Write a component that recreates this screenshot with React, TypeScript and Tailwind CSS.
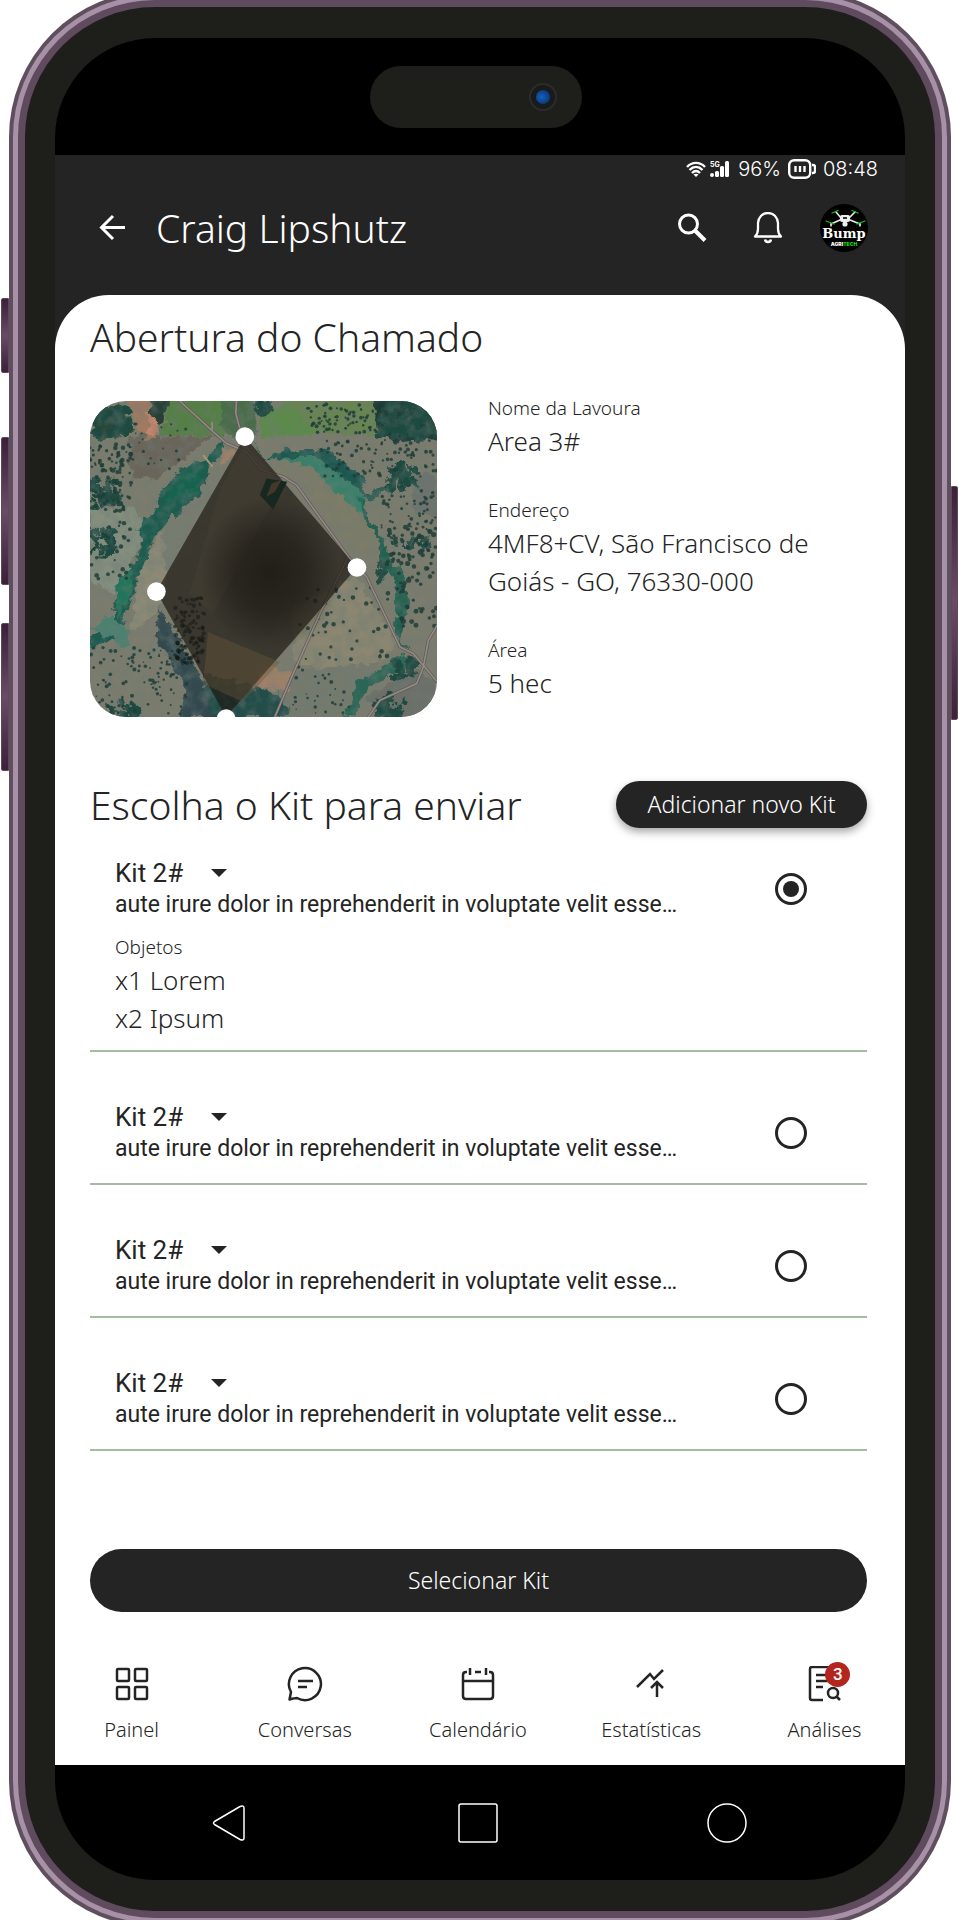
import React, { useState } from "react";

const fields = [
  { label: "Nome da Lavoura", value: "Area 3#" },
  { label: "Endereço", value: "4MF8+CV, São Francisco de Goiás - GO, 76330-000" },
  { label: "Área", value: "5 hec" },
];

const kits = [
  { id: 1, name: "Kit 2#", objects: ["x1 Lorem", "x2 Ipsum"] },
  { id: 2, name: "Kit 2#", objects: [] },
  { id: 3, name: "Kit 2#", objects: [] },
  { id: 4, name: "Kit 2#", objects: [] },
];

const kitDescription =
  "aute irure dolor in reprehenderit in voluptate velit esse…";

// small seeded generator so the vegetation is the same on every render
const scatter = (
  seed: number,
  count: number,
  x: number,
  y: number,
  w: number,
  h: number,
  min: number,
  max: number
) => {
  let s = seed * 7919;
  const next = () => {
    s = (s * 16807) % 2147483647;
    return s / 2147483647;
  };
  return Array.from({ length: count }, () => ({
    x: Math.round(x + next() * w),
    y: Math.round(y + next() * h),
    r: Math.round((min + next() * (max - min)) * 10) / 10,
  }));
};

const bushes = [
  ...scatter(11, 90, 30, 190, 130, 210, 3, 7),
  ...scatter(17, 20, 160, 130, 160, 150, 2, 5),
  ...scatter(23, 30, 30, 420, 130, 180, 3, 7),
  ...scatter(37, 110, 30, 800, 290, 205, 2, 6),
  ...scatter(41, 80, 720, 180, 350, 110, 3, 6),
  ...scatter(43, 50, 900, 320, 170, 130, 3, 6),
  ...scatter(59, 50, 920, 440, 150, 120, 4, 8),
  ...scatter(67, 35, 950, 560, 120, 180, 4, 8),
  ...scatter(71, 45, 660, 620, 270, 220, 3, 7),
  ...scatter(73, 30, 630, 850, 200, 150, 2, 6),
  ...scatter(83, 70, 680, 70, 210, 90, 3, 6),
];

const groves = [
  ...scatter(101, 60, 40, 80, 110, 90, 6, 14),
  ...scatter(103, 60, 895, 60, 165, 110, 8, 16),
  ...scatter(107, 40, 925, 260, 85, 65, 6, 13),
  ...scatter(109, 40, 30, 300, 90, 80, 5, 12),
  ...scatter(113, 40, 30, 450, 80, 80, 5, 12),
  ...scatter(127, 30, 525, 70, 45, 30, 5, 10),
  ...scatter(131, 30, 885, 950, 90, 60, 6, 13),
  ...scatter(137, 25, 90, 970, 80, 50, 6, 12),
  ...scatter(139, 15, 892, 550, 30, 45, 5, 10),
  ...scatter(149, 25, 940, 840, 60, 50, 5, 12),
  ...scatter(151, 25, 925, 470, 130, 30, 4, 9),
];

const FieldMap = () => (
  <svg
    viewBox="30 63 1042 947"
    preserveAspectRatio="xMidYMid slice"
    className="block h-[316px] w-full rounded-[36px]"
    role="img"
    aria-label="Mapa da lavoura"
  >
    <defs>
      <filter id="soft" x="-10%" y="-10%" width="120%" height="120%">
        <feTurbulence type="fractalNoise" baseFrequency="0.035" numOctaves="3" seed="4" />
        <feDisplacementMap
          in="SourceGraphic"
          scale="36"
          xChannelSelector="R"
          yChannelSelector="G"
        />
        <feGaussianBlur stdDeviation="2" />
      </filter>
      <radialGradient id="shade">
        <stop offset="0" stopColor="#17140f" stopOpacity="0.7" />
        <stop offset="0.5" stopColor="#17140f" stopOpacity="0.5" />
        <stop offset="1" stopColor="#17140f" stopOpacity="0" />
      </radialGradient>
      <filter id="grain" x="0" y="0" width="100%" height="100%">
        <feTurbulence type="fractalNoise" baseFrequency="0.03" numOctaves="5" seed="9" />
        <feColorMatrix values="0 0 0 0 0.16  0 0 0 0 0.2  0 0 0 0 0.18  2 0 0 0 -0.75" />
      </filter>
    </defs>
    <rect x="0" y="0" width="1100" height="1100" fill="#7b7c6d" />
    <g filter="url(#soft)">
      <path d="M150 170H400L330 220 240 290 150 300Z" fill="#6b655a" />
      <path d="M30 390 160 380 190 430 160 560 100 640 30 600Z" fill="#848e7e" />
      <path d="M250 455 370 350 440 240 250 600Z" fill="#777b70" />
      <path d="M180 560 250 450 260 600 230 700 150 760Z" fill="#8c8a76" />
      <path d="M560 260 700 250 860 420 900 540 820 520 650 300Z" fill="#7c7b68" />
      <path d="M640 680 830 590 950 790 850 900 640 840Z" fill="#8a8671" />
      <path d="M620 870 900 850 800 1010H600Z" fill="#757a6d" />
      <path d="M990 270 1072 290V420L1000 390Z" fill="#6d736d" />
      <path d="M860 950 1000 870 1072 900V1010H900Z" fill="#6c7069" />
      <path d="M140 60H240V170H180Z" fill="#a37a60" />
      <path d="M205 95H240V165H200Z" fill="#c2856b" />
      <path d="M275 50H480V168H240Z" fill="#557f45" />
      <path d="M420 50H530V170H430Z" fill="#4a6c48" />
      <path d="M540 90 640 70 730 165 540 170Z" fill="#5b8a4b" />
      <path d="M560 50H900V160L720 165 640 80Z" fill="#678551" />
      <path d="M215 55H275L245 130 210 100Z" fill="#263f38" />
      <path d="M880 50H1080V180L940 190 890 150Z" fill="#1f3a34" />
      <path d="M50 80H130L160 150 70 180 40 160Z" fill="#2e4638" />
      {/* river vegetation */}
      <path
        d="M430 180 380 235 300 270 240 340 225 390 180 430V500L170 550 120 600 100 680 100 740 30 770V800L110 780 150 680 175 590 220 480 290 400 360 340 385 260 440 210Z"
        fill="#1d5c50"
      />
      <path d="M300 290 370 260 360 330 250 370Z" fill="#176350" />
      <path d="M110 610 160 570 150 660 110 720Z" fill="#23755a" />
      <path d="M30 740 90 710 150 760 140 810 90 770Z" fill="#4b8170" />
      <path d="M500 180 560 235 620 210 720 205 780 240 850 290 860 350 780 290 690 225 600 245 560 240Z" fill="#1d5850" />
      <path d="M600 240 690 225 790 290 850 340 860 420 760 330 700 260Z" fill="#37806a" />
      <path d="M840 340 865 410 900 450 925 530 965 570 985 640 960 800 990 810 945 760 945 600 905 545 890 470 850 410Z" fill="#22604f" />
      <path d="M960 820 880 880 830 900 820 960 790 1010 830 1000 860 920 940 880 1000 850Z" fill="#2a6654" />
      <path d="M850 350 930 310 940 320 860 370Z" fill="#2f5f52" />
      <path d="M240 680 310 800 350 870 430 1010H300L320 930 280 860 230 780Z" fill="#31494f" />
      <path d="M370 880 540 920 610 950 630 1010H400Z" fill="#224d49" />
      <path d="M550 860 640 870 620 930 520 920Z" fill="#a08168" />
      <path d="M430 200 470 205 450 240 420 260Z" fill="#9a8168" />
    </g>
    <g fill="#1c4a40" filter="url(#soft)">
      {groves.map((b, i) => (
        <circle key={i} cx={b.x} cy={b.y} r={b.r} />
      ))}
    </g>
    <rect x="30" y="63" width="1042" height="947" filter="url(#grain)" opacity="0.5" />
    <g fill="#1f3d38" fillOpacity="0.85">
      {bushes.map((b, i) => (
        <circle key={i} cx={b.x} cy={b.y} r={b.r} />
      ))}
    </g>
    <g fill="none" strokeLinejoin="round">
      <g stroke="#5e5650" strokeWidth="9">
        <path d="M300 63 400 155 440 190 500 215 545 270 610 290 650 315 805 530 860 590 960 800 1000 820 1072 905" />
        <path d="M470 63 468 100 480 145" />
        <path d="M805 530 720 700 640 880 585 1010" />
        <path d="M1072 735 1045 780 1030 860 1010 910 900 960 865 1010" />
      </g>
      <g stroke="#938a88" strokeWidth="5">
        <path d="M300 63 400 155 440 190 500 215 545 270 610 290 650 315 805 530 860 590 960 800 1000 820 1072 905" />
        <path d="M470 63 468 100 480 145M397 125V150" />
        <path d="M805 530 720 700 640 880 585 1010" />
        <path d="M1072 735 1045 780 1030 860 1010 910 900 960 865 1010" />
      </g>
      <path d="M370 225 398 260" stroke="#a69477" strokeWidth="6" />
    </g>
    {/* selected area */}
    <path d="M495 170 831 562 439 1010 230 634Z" fill="#1d1811" fillOpacity="0.68" />
    <path d="M495 190 420 330 330 640 400 700 560 400 620 330Z" fill="#544b3b" fillOpacity="0.2" />
    <ellipse cx="570" cy="580" rx="210" ry="230" fill="url(#shade)" />
    <path d="M385 755 600 845 490 965 370 910Z" fill="#6b573c" fillOpacity="0.4" />
    <path d="M560 295 622 305 580 388 540 345Z" fill="#16281f" />
    <path d="M575 310 605 300 585 335 560 350Z" fill="#44382a" />
    <g fill="#151b16" fillOpacity="0.6">
      {scatter(157, 110, 285, 650, 90, 200, 3, 7).map((b, i) => (
        <circle key={i} cx={b.x} cy={b.y} r={b.r} />
      ))}
    </g>
    <g fill="#fff">
      <circle cx="495" cy="170" r="28" />
      <circle cx="831" cy="562" r="28" />
      <circle cx="230" cy="634" r="28" />
      <circle cx="439" cy="1015" r="28" />
    </g>
  </svg>
);

const BrandAvatar = () => (
  <svg viewBox="0 0 48 48" className="size-12" role="img" aria-label="Bump Agritech">
    <circle cx="24" cy="24" r="24" fill="#000" />
    <g fill="none" stroke="#e8e8e8" strokeWidth="1.600" strokeLinecap="round">
      <path d="M21 14 16 8M29 14 35 8M20 16 11 20M30 16 40 20" />
      <path d="M11 20V22M40 20V22" />
    </g>
    <g fill="none" stroke="#12c312" strokeWidth="1.300" strokeLinecap="round">
      <path d="M12 9 18 6.500M32 6.500 38 9M6 17 14 20M37 20 45 17" />
    </g>
    <rect x="20" y="11" width="10" height="7" rx="2" fill="#eee" />
    <rect x="23" y="13" width="4" height="2" fill="#333" />
    <circle cx="25" cy="20" r="2.600" fill="#eee" />
    <text x="24" y="34" textAnchor="middle" fontSize="13" fontWeight="700" fill="#fff" fontFamily="DejaVu Serif, serif">
      Bump
    </text>
    <text x="24" y="42" textAnchor="middle" fontSize="5" fontWeight="900" fill="#fff" fontFamily="Inter, sans-serif">
      AGRI<tspan fill="#12d112">TECH</tspan>
    </text>
  </svg>
);

const StatusBar = () => (
  <div className="flex items-center justify-end pr-[27px] font-[Inter,sans-serif] text-[20px] leading-7 font-light text-white">
    <svg viewBox="0 0 20 16" className="mr-1 h-4 w-5" fill="none" stroke="currentColor" strokeWidth="2.400">
      <path d="M1 6C6 0.500 14 0.500 19 6M3.500 9C7.500 5 12.500 5 16.500 9M6 12C8.500 9.500 11.500 9.500 14 12" />
      <path d="M7.500 13.500 10 16 12.500 13.500Q10 12 7.500 13.500Z" fill="currentColor" stroke="none" />
    </svg>
    <svg viewBox="0 0 20 16" className="mr-2 h-4 w-5" fill="currentColor">
      <text x="0" y="6" fontSize="7" fontWeight="700">5G</text>
      <circle cx="2" cy="14" r="2" />
      <rect x="5" y="10" width="4" height="6" rx="1.500" />
      <rect x="10" y="5" width="4" height="11" rx="1.500" />
      <rect x="15" y="0" width="4" height="16" rx="1.500" />
    </svg>
    <span>96%</span>
    <svg viewBox="0 0 28 20" className="mx-[7px] h-5 w-7" fill="none" stroke="currentColor" strokeWidth="2.400">
      <rect x="1.200" y="1.200" width="21" height="17.600" rx="5" />
      <path d="M7.500 7V13M12 7V13M16.500 7V13M24 6H25Q27 6 27 8V12Q27 14 25 14H24" />
    </svg>
    <span>08:48</span>
  </div>
);

const Header = () => (
  <header className="mt-[21px] flex h-12 items-center pr-[37px] pl-[43px] text-white">
    <button type="button" aria-label="Voltar">
      <svg viewBox="0 0 28 28" className="size-7" fill="none" stroke="currentColor" strokeWidth="3">
        <path d="M27 13.500H4M15 2 3.500 13.500 15 25" />
      </svg>
    </button>
    <h1 className="ml-[30px] flex-1 text-[39px] leading-12">Craig Lipshutz</h1>
    <button type="button" aria-label="Pesquisar">
      <svg viewBox="0 0 32 32" className="size-8" fill="none" stroke="currentColor" strokeWidth="3">
        <circle cx="12.500" cy="12" r="9" />
        <path d="M19 18.500 29 28.500" strokeWidth="4" />
      </svg>
    </button>
    <button type="button" aria-label="Notificações" className="ml-11">
      <svg viewBox="0 0 32 32" className="size-8" fill="none" stroke="currentColor" strokeWidth="2.300">
        <path d="M3 24.500H29C27 22.500 26 20 26 17V11C25.500 5 21.500 1 16 1S6.500 5 6 11V17C6 20 5 22.500 3 24.500Z" strokeLinejoin="round" />
        <path d="M13 27.500Q13.500 30 16 30T19 27.500" strokeWidth="2.500" />
      </svg>
    </button>
    <button type="button" aria-label="Perfil" className="ml-9">
      <BrandAvatar />
    </button>
  </header>
);

type KitProps = {
  kit: (typeof kits)[number];
  checked: boolean;
  onSelect: () => void;
};

const KitItem = ({ kit, checked, onSelect }: KitProps) => (
  <li className="border-b-2 border-[#a3bda1] pt-[49px] pr-[60px] pb-[18px] pl-[25px] first:pt-7 first:pb-[13px]">
    <div className="flex items-center justify-between">
      <div className="font-[Roboto,sans-serif] font-normal">
        <button type="button" className="flex items-center gap-7 text-[26px] leading-8">
          {kit.name}
          <svg viewBox="0 0 16 8" className="h-2 w-4" fill="currentColor">
            <path d="M0 0H16L8 8Z" />
          </svg>
        </button>
        <label htmlFor={`kit-${kit.id}`} className="block text-[23px] leading-8">
          {kitDescription}
        </label>
      </div>
      <input
        type="radio"
        name="kit"
        id={`kit-${kit.id}`}
        checked={checked}
        onChange={onSelect}
        className="grid size-8 shrink-0 appearance-none place-content-center rounded-full border-3 border-[#242424] before:size-4 before:rounded-full checked:before:bg-[#242424]"
      />
    </div>
    {kit.objects.length > 0 && (
      <div className="mt-3">
        <p className="text-[19px] leading-7">Objetos</p>
        {kit.objects.map((item) => (
          <p key={item} className="text-[26px] leading-[38px]">
            {item}
          </p>
        ))}
      </div>
    )}
  </li>
);

const navItems = [
  {
    label: "Painel",
    icon: (
      <>
        <rect x="3" y="3" width="12" height="12" rx="1" />
        <rect x="21" y="3" width="12" height="12" rx="1" />
        <rect x="3" y="21" width="12" height="12" rx="1" />
        <rect x="21" y="21" width="12" height="12" rx="1" />
      </>
    ),
  },
  {
    label: "Conversas",
    icon: (
      <>
        <path d="M2.500 33.500 4 26A16 16 0 1 1 10 32Q8 32 2.500 33.500Z" strokeLinejoin="round" />
        <path d="M11 15H26M11 21H20" />
      </>
    ),
  },
  {
    label: "Calendário",
    icon: (
      <path d="M7 6H6Q3 6 3 9V30Q3 33 6 33H30Q33 33 33 30V9Q33 6 30 6H29M15 6H21M10 2V9M26 2V9M3 15H33" />
    ),
  },
  {
    label: "Estatísticas",
    icon: <path d="M4 21 17 8 21 13 30 4M24 31V17M18 22 24 16 30 22" />,
  },
  {
    label: "Análises",
    badge: 3,
    icon: (
      <>
        <path d="M17 34H6Q4 34 4 32V3Q4 1 6 1H28V15M10 9H24M10 15H24M10 21H17" />
        <circle cx="27" cy="27" r="5" />
        <path d="M30 30 34 34" />
      </>
    ),
  },
];

const BottomNav = () => (
  <nav className="mt-[54px] -mr-[6px] -ml-[10px] grid grid-cols-5 pb-[21px]">
    {navItems.map((item) => (
      <a key={item.label} href="#" className="flex flex-col items-center gap-[14px]">
        <span className="relative">
          <svg viewBox="0 0 36 36" className="size-9" fill="none" stroke="currentColor" strokeWidth="2.500">
            {item.icon}
          </svg>
          {item.badge && (
            <span className="absolute -top-1 -right-2 flex size-[25px] items-center justify-center rounded-full bg-[#b3261e] font-[Roboto,sans-serif] text-[17px] leading-none font-medium text-white">
              {item.badge}
            </span>
          )}
        </span>
        <span className="text-[20px] leading-7">{item.label}</span>
      </a>
    ))}
  </nav>
);

const SystemButtons = () => (
  <div className="flex h-[115px] items-center justify-between pr-[158px] pl-[154px] text-white">
    <button type="button" aria-label="Retornar">
      <svg viewBox="0 0 40 40" className="size-10" fill="none" stroke="currentColor" strokeWidth="1.500">
        <path d="M5.500 18.500 31 3.500Q35 2 35 5V35Q35 38 31 36.500L5.500 21.500Q3.500 20 5.500 18.500Z" />
      </svg>
    </button>
    <button type="button" aria-label="Recentes">
      <svg viewBox="0 0 40 40" className="size-10" fill="none" stroke="currentColor" strokeWidth="1.500">
        <rect x="1" y="1" width="38" height="38" rx="2" />
      </svg>
    </button>
    <button type="button" aria-label="Início">
      <svg viewBox="0 0 40 40" className="size-10" fill="none" stroke="currentColor" strokeWidth="1.500">
        <circle cx="20" cy="20" r="19" />
      </svg>
    </button>
  </div>
);

const sideButton =
  "absolute border border-[#5b4a59] bg-linear-to-b from-[#3d2039] via-[#6b4a66] to-[#3d2039]";

const App = () => {
  const [selected, setSelected] = useState(1);

  return (
    <div className="flex overflow-hidden bg-white pr-2 pl-[9px] font-['Noto_Sans',sans-serif] font-light text-[#242424]">
      <div className="relative -mt-[9px] -mb-[6px] min-w-0 flex-1">
        <div className={`${sideButton} top-[307px] -left-2 h-[75px] w-2 rounded-l-xs`} />
        <div className={`${sideButton} top-[446px] -left-2 h-[148px] w-2 rounded-l-xs`} />
        <div className={`${sideButton} top-[632px] -left-2 h-[148px] w-2 rounded-l-xs`} />
        <div className={`${sideButton} top-[495px] -right-[7px] h-[234px] w-[7px] rounded-r-xs`} />
        {/* metal frame, three bands */}
        <div className="rounded-[146px] bg-[#5f4e5e] p-1">
          <div className="rounded-[142px] bg-[#a791a7] p-[5px]">
            <div className="rounded-[137px] bg-[#5f4a5e] p-[7px]">
              <div className="rounded-[130px] bg-[#1e1e1b] px-[30px] py-[31px]">
                <div className="overflow-hidden rounded-[100px] bg-black">
                  <div className="flex h-[117px] justify-center pt-7 pr-2">
                    <div className="flex h-[62px] w-[212px] items-center justify-end rounded-full bg-[#1e1e1b] pr-[25px]">
                      <div className="flex size-7 items-center justify-center rounded-full border-2 border-[#2c2d2b] bg-[#181a1c]">
                        <div className="size-[14px] rounded-full bg-radial-[at_40%_50%] from-[#1260c4] to-[#0a2a58]" />
                      </div>
                    </div>
                  </div>
                  <div className="bg-[#242424]">
                    <StatusBar />
                    <Header />
                    <main className="mt-[43px] rounded-t-[54px] bg-white pt-[18px]">
                      <div className="pr-[38px] pl-[35px]">
                        <h2 className="text-[39px] leading-12">Abertura do Chamado</h2>
                        <div className="mt-[33px] flex items-start gap-[51px]">
                          <div className="mt-[7px] w-[347px] shrink-0">
                            <FieldMap />
                          </div>
                          <dl className="flex flex-1 flex-col gap-9">
                            {fields.map((field) => (
                              <div key={field.label}>
                                <dt className="text-[19px] leading-7">{field.label}</dt>
                                <dd className="text-[26px] leading-[38px]">{field.value}</dd>
                              </div>
                            ))}
                          </dl>
                        </div>
                        <div className="mt-16 flex items-start justify-between">
                          <h2 className="text-[39px] leading-12">Escolha o Kit para enviar</h2>
                          <button
                            type="button"
                            className="h-[47px] w-[251px] rounded-full bg-[#242424] text-[23px] text-white shadow-[0_4px_8px_rgba(0,0,0,0.35)]"
                          >
                            Adicionar novo Kit
                          </button>
                        </div>
                        <ul>
                          {kits.map((kit) => (
                            <KitItem
                              key={kit.id}
                              kit={kit}
                              checked={selected === kit.id}
                              onSelect={() => setSelected(kit.id)}
                            />
                          ))}
                        </ul>
                        <button
                          type="button"
                          className="mt-[98px] h-[63px] w-full rounded-full bg-[#242424] text-[23px] text-white"
                        >
                          Selecionar Kit
                        </button>
                      </div>
                      <BottomNav />
                    </main>
                  </div>
                  <SystemButtons />
                </div>
              </div>
            </div>
          </div>
        </div>
      </div>
    </div>
  );
};

export default App;
